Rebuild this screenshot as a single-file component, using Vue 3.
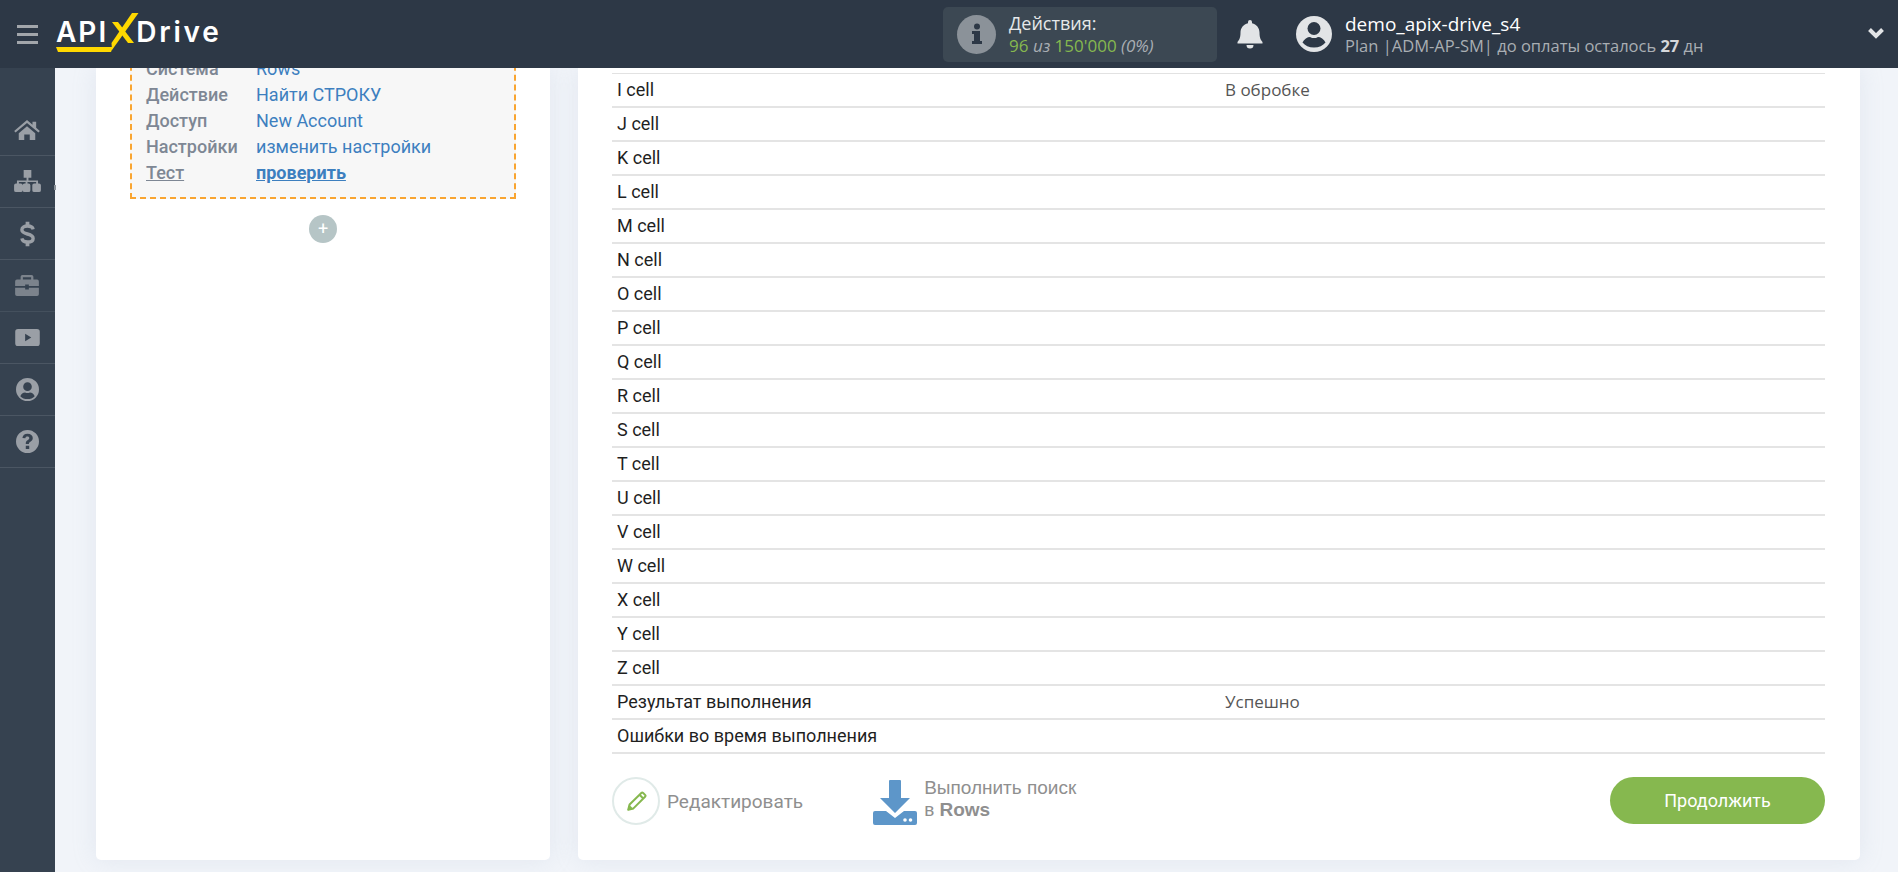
<script setup>
const rows = [
  ['I cell', 'В обробке'], ['J cell', ''], ['K cell', ''], ['L cell', ''], ['M cell', ''],
  ['N cell', ''], ['O cell', ''], ['P cell', ''], ['Q cell', ''], ['R cell', ''],
  ['S cell', ''], ['T cell', ''], ['U cell', ''], ['V cell', ''], ['W cell', ''],
  ['X cell', ''], ['Y cell', ''], ['Z cell', ''],
  ['Результат выполнения', 'Успешно'], ['Ошибки во время выполнения', '']
]
const summary = [
  ['Система', 'Rows'], ['Действие', 'Найти СТРОКУ'], ['Доступ', 'New Account'], ['Настройки', 'изменить настройки']
]
</script>

<template>
  <div class="page">
    <header class="topbar">
      <div class="burger"><i></i><i></i><i></i></div>
      <div class="logo">
        <span class="logo-word api">API</span>
        <svg class="logo-x" width="30" height="38" viewBox="0 0 30 38">
          <polygon fill="#ffd800" points="23,0 29.500,0 3,37 2.500,30" />
          <polygon fill="#ffd800" points="3,9 9,9 25,30 19,30" />
        </svg>
        <span class="logo-word drive">Drive</span>
        <svg class="logo-line" width="57" height="5" viewBox="0 0 57 5"><polygon fill="#ffd800" points="0,0 57,0 55,5 2,5" /></svg>
      </div>
      <div class="actions">
        <span class="info-ico"><svg width="12" height="22" viewBox="0 0 12 22"><circle cx="6" cy="3.500" r="3" fill="#2d3846"/><path d="M1 8h8v10h2v3H1v-3h2v-7H1z" fill="#2d3846"/></svg></span>
        <div class="actions-text">
          <div class="actions-title">Действия:</div>
          <div class="actions-count"><b>96</b> <em>из</em> <b>150'000</b> <em>(0%)</em></div>
        </div>
      </div>
      <svg class="bell" width="26" height="30" viewBox="0 0 26 30">
        <path fill="#e2e4e6" d="M13 1a2 2 0 0 1 2 2v1.200c4.500 1 7.500 4.800 7.500 9.300 0 6 1.500 7.500 3 9.500v1.500H.5V23c1.500-2 3-3.500 3-9.500 0-4.500 3-8.300 7.500-9.300V3a2 2 0 0 1 2-2zM9.500 26h7a3.500 3.500 0 0 1-7 0z"/>
      </svg>
      <svg class="avatar" width="36" height="36" viewBox="0 0 36 36">
        <circle cx="18" cy="18" r="18" fill="#e2e4e6"/>
        <circle cx="18" cy="12.500" r="6.500" fill="#2d3846"/>
        <path d="M6.500 26.500C8 23 11.500 21 14 21c1.500 1 2.500 1 4 1s2.500 0 4-1c2.500 0 6 2 7.500 5.500-2.500 3-6.500 5-11.500 5s-9-2-11.500-5z" fill="#2d3846"/>
      </svg>
      <div class="user">
        <div class="user-name">demo_apix-drive_s4</div>
        <div class="user-plan">Plan |ADM-AP-SM| до оплаты осталось <b>27</b> дн</div>
      </div>
      <svg class="chevron" width="18" height="12" viewBox="0 0 18 12"><path d="M2.500 2.500 9 9l6.500-6.500" fill="none" stroke="#e2e4e6" stroke-width="4"/></svg>
    </header>

    <div class="body">
      <nav class="sidebar">
        <a class="nav-item">
          <svg width="26" height="22" viewBox="0 0 28 24"><path fill="#9a9fa6" d="M14 1 0 13l1.500 1.800L14 4.300l12.500 10.500L28 13l-4-3.400V3h-4v3.200zM5 15.500 14 8l9 7.500V23h-6v-6h-6v6H5z"/></svg>
        </a>
        <a class="nav-item tick">
          <svg width="29" height="23" viewBox="0 0 30 24"><path fill="#9a9fa6" d="M11 0h8v8h-3v3h10v3h1a2 2 0 0 1 2 2v5a2 2 0 0 1-2 2h-5a2 2 0 0 1-2-2v-5a2 2 0 0 1 2-2h2v-1.500h-9V14h1a2 2 0 0 1 2 2v5a2 2 0 0 1-2 2h-4a2 2 0 0 1-2-2v-5a2 2 0 0 1 2-2h1v-1.500H6V14h2a2 2 0 0 1 2 2v5a2 2 0 0 1-2 2H3a2 2 0 0 1-2-2v-5a2 2 0 0 1 2-2h1v-3h10V8h-3z"/></svg>
        </a>
        <a class="nav-item">
          <svg width="15" height="30" viewBox="0 0 16 28"><path fill="none" stroke="#9a9fa6" stroke-width="3.600" d="M14 9c-.5-2.500-3-3.500-6-3.500S2 7 2 9.500c0 6 12 3 12 9.200 0 2.600-2.800 3.800-6 3.800s-5.500-1.200-6-3.800"/><path fill="#9a9fa6" d="M6 1h4v5H6zM6 22h4v5H6z"/></svg>
        </a>
        <a class="nav-item dim">
          <svg width="24" height="21" viewBox="0 0 26 23"><path fill="#9a9fa6" d="M8 0h10a2 2 0 0 1 2 2v3h4a2 2 0 0 1 2 2v5H15v-1.500h-4V12H0V7a2 2 0 0 1 2-2h4V2a2 2 0 0 1 2-2zm.500 2.500V5h9V2.500zM0 14h11v2h4v-2h11v7a2 2 0 0 1-2 2H2a2 2 0 0 1-2-2z"/></svg>
        </a>
        <a class="nav-item">
          <svg width="25" height="17" viewBox="0 0 26 18"><path fill="#9a9fa6" fill-rule="evenodd" d="M3 0h20a3 3 0 0 1 3 3v12a3 3 0 0 1-3 3H3a3 3 0 0 1-3-3V3a3 3 0 0 1 3-3zm7.500 5v8l6.500-4z"/></svg>
        </a>
        <a class="nav-item">
          <svg width="23" height="23" viewBox="0 0 24 24"><path fill="#9a9fa6" fill-rule="evenodd" d="M12 0a12 12 0 1 1 0 24 12 12 0 0 1 0-24zm0 4.500a4.500 4.500 0 1 0 0 9 4.500 4.500 0 0 0 0-9zM4.500 19c1.800 2 4.500 3 7.500 3s5.700-1 7.500-3c-.8-2.500-2.800-4-5-4-.8.400-1.600.6-2.500.6s-1.700-.2-2.500-.6c-2.200 0-4.200 1.500-5 4z"/></svg>
        </a>
        <a class="nav-item">
          <svg width="23" height="23" viewBox="0 0 24 24"><path fill="#9a9fa6" fill-rule="evenodd" d="M12 0a12 12 0 1 1 0 24 12 12 0 0 1 0-24zm-1.800 16.500v3.300h3.600v-3.300zM12 4c-3 0-5 1.600-5.300 4.300l3 .4c.2-1.300 1-2 2.200-2s2 .7 2 1.700c0 .8-.4 1.300-1.500 2-1.700 1.100-2.200 2-2.200 3.700v.6h3.300v-.3c0-1 .3-1.400 1.500-2.200 1.500-1 2.500-2 2.500-3.900C17.500 5.700 15.300 4 12 4z"/></svg>
        </a>
      </nav>

      <main class="content">
        <section class="card left">
          <div class="step">
            <div v-for="r in summary" :key="r[0]" class="step-row">
              <span class="step-key">{{ r[0] }}</span>
              <a class="step-val">{{ r[1] }}</a>
            </div>
            <div class="step-row">
              <u class="step-key">Тест</u>
              <a class="step-val check">проверить</a>
            </div>
          </div>
          <div class="add">+</div>
        </section>

        <section class="card right">
          <div class="table">
            <div v-for="r in rows" :key="r[0]" class="row">
              <span class="cell-key">{{ r[0] }}</span>
              <span class="cell-val">{{ r[1] }}</span>
            </div>
          </div>
          <div class="foot">
            <a class="edit">
              <span class="edit-ico">
                <svg width="21" height="21" viewBox="0 0 24 24"><path fill="none" stroke="#86b84f" stroke-width="2.300" stroke-linejoin="round" d="M2.500 21.500l1.600-6L17.500 2.200a1.500 1.500 0 0 1 2.100 0l2.200 2.200a1.500 1.500 0 0 1 0 2.100L8.500 19.900zM15.500 4.300l4.200 4.200"/><path fill="#86b84f" d="M2 22l1.500-6.500 5 5z"/></svg>
              </span>
              <span>Редактировать</span>
            </a>
            <a class="run">
              <svg width="44" height="45" viewBox="0 0 44 45">
                <path fill="#5d96c9" d="M17 0h10a1 1 0 0 1 1 1v17h9L22 33 7 18h9V1a1 1 0 0 1 1-1z"/>
                <path fill="#5d96c9" d="M2 31h11l9 7 9-7h11a2 2 0 0 1 2 2v10a2 2 0 0 1-2 2H2a2 2 0 0 1-2-2V33a2 2 0 0 1 2-2z"/>
                <circle cx="32" cy="40" r="1.800" fill="#fff"/><circle cx="37.500" cy="40" r="1.800" fill="#fff"/>
              </svg>
              <span class="run-text">Выполнить поиск<br />в <b>Rows</b></span>
            </a>
            <button class="next">Продолжить</button>
          </div>
        </section>
      </main>
    </div>
  </div>
</template>

<style>
html, body { margin: 0; padding: 0; background: #f0f3f9; }
</style>

<style scoped>
.page { width: 1898px; height: 872px; overflow: hidden; display: flex; flex-direction: column; font-family: Roboto, "Liberation Sans", sans-serif; background: #f1f4f9; }
.topbar { height: 68px; flex: none; background: #2d3846; display: flex; align-items: center; position: relative; z-index: 2; font-family: "Open Sans", sans-serif; }
.burger { width: 21px; margin-left: 17px; display: flex; flex-direction: column; gap: 5px; }
.burger i { display: block; height: 3px; background: #a2a6ab; }
.logo { margin-left: 18px; width: 166px; height: 50px; display: flex; align-items: center; position: relative; }
.logo-word { font-family: Inter, sans-serif; font-weight: 600; font-size: 28px; color: #fff; line-height: 1; margin-top: -4px; }
.api { letter-spacing: 2px; }
.drive { margin-left: -3px; letter-spacing: 2.800px; }
.logo-x { margin-left: 1px; margin-top: -5px; }
.logo-line { position: absolute; left: 0; top: 38px; }
.actions { margin-left: 721px; width: 274px; height: 55px; background: #3c4853; border-radius: 5px; display: flex; align-items: center; }
.info-ico { width: 39px; height: 39px; margin-left: 14px; border-radius: 50%; background: #8b9299; display: flex; align-items: center; justify-content: center; }
.actions-text { margin-left: 13px; }
.actions-title { font-size: 18px; line-height: 23px; color: #e6e8ea; }
.actions-count { font-size: 17px; line-height: 22px; color: #86b84f; }
.actions-count b { font-weight: 400; }
.actions-count em { color: #a9aeb3; }
.bell { margin-left: 20px; }
.avatar { margin-left: 33px; }
.user { margin-left: 13px; }
.user-name { font-size: 19px; line-height: 24px; color: #fff; }
.user-plan { font-size: 16.500px; line-height: 20px; color: #a9aeb3; }
.user-plan b { color: #d5d7da; }
.chevron { position: absolute; right: 13px; top: 27px; }

.body { flex: 1; display: flex; min-height: 0; }
.sidebar { width: 55px; flex: none; background: #364250; padding-top: 36px; box-sizing: border-box; }
.nav-item { height: 52px; display: flex; align-items: center; justify-content: center; border-bottom: 1px solid #4b5663; box-sizing: border-box; padding-right: 1px; position: relative; }
.nav-item.dim { opacity: .7; }
.nav-item.tick::after { content: ""; position: absolute; left: 54px; top: 29px; width: 2px; height: 5px; background: #8b9299; }

.content { flex: 1; display: flex; align-items: flex-start; padding-left: 41px; gap: 28px; overflow: hidden; }
.card { background: #fff; border-radius: 0 0 5px 5px; box-shadow: 0 0 24px rgba(160, 175, 200, .18); height: 792px; box-sizing: border-box; flex: none; }
.left { width: 454px; padding: 0 34px; }
.step { width: 386px; height: 144px; margin-top: -13px; box-sizing: border-box; background: #f7f7f7; border: 2px dashed #f9a531; border-top: 0; padding: 0 14px; }
.step-row { display: flex; height: 26px; align-items: center; font-size: 18px; }
.step-key { width: 110px; color: #7e8794; font-weight: 500; }
.step-val { color: #3d7fbf; }
.check { font-weight: 700; text-decoration: underline; }
.add { width: 28px; height: 28px; margin: 16px auto 0; border-radius: 50%; background: #b6c5c6; color: #fff; font-size: 18px; line-height: 27px; text-align: center; }

.right { width: 1282px; padding: 5px 35px 0 34px; }
.table { border-top: 1px solid #e2e2e2; }
.row { height: 34px; box-sizing: border-box; border-bottom: 2px solid #e4e4e4; padding: 0 0 1px 5px; display: flex; align-items: center; font-size: 18px; color: #1f1f1f; }
.cell-key { width: 608px; flex: none; }
.cell-val { color: #555; font-family: "Open Sans", sans-serif; font-size: 17px; }
.foot { display: flex; align-items: center; margin-top: 23px; height: 48px; position: relative; }
.edit { display: flex; align-items: center; font-size: 19px; color: #8f8f8f; }
.edit-ico { width: 44px; height: 44px; border: 2px solid #e0eae8; border-radius: 50%; display: flex; align-items: center; justify-content: center; margin-right: 7px; }
.run { display: flex; align-items: center; margin-left: 70px; }
.run svg { margin-right: 7px; margin-top: 2px; }
.run-text { font-family: "Liberation Sans", Arial, sans-serif; font-size: 19px; line-height: 22px; color: #8f8f8f; margin-top: -4px; }
.next { margin-left: auto; margin-top: -1px; width: 215px; height: 47px; border: 0; border-radius: 24px; background: #86b84f; color: #fff; font-family: Roboto, sans-serif; font-size: 18px; }
</style>
